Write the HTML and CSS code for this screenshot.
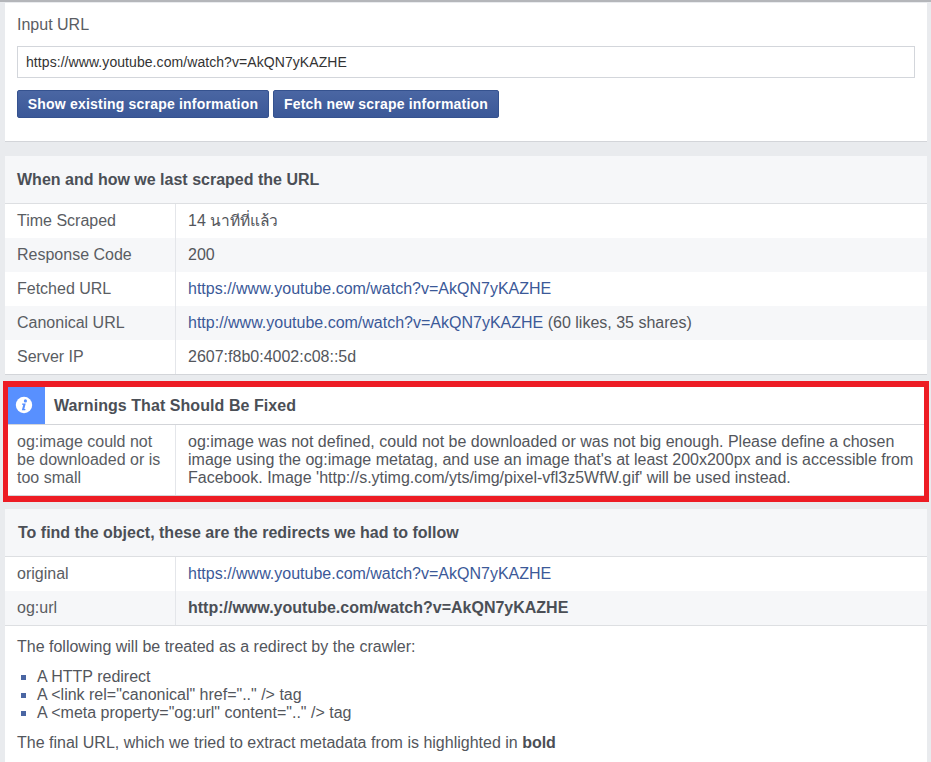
FILE: index.html
```html
<!DOCTYPE html>
<html lang="en">
<head>
<meta charset="utf-8">
<title>Sharing Debugger</title>
<link rel="stylesheet" href="styles.css">
</head>
<body>
<main class="page">
  <section class="card input-card">
    <div class="label">Input URL</div>
    <div class="url-input">https://www.youtube.com/watch?v=AkQN7yKAZHE</div>
    <div class="buttons">
      <button class="btn btn-first">Show existing scrape information</button>
      <button class="btn btn-second">Fetch new scrape information</button>
    </div>
  </section>

  <section class="card scrape-card">
    <h2 class="heading">When and how we last scraped the URL</h2>
    <div class="row"><div class="key">Time Scraped</div><div class="val">14 <span class="thai">นาทีที่แล้ว</span></div></div>
    <div class="row alt"><div class="key">Response Code</div><div class="val">200</div></div>
    <div class="row"><div class="key">Fetched URL</div><div class="val"><a href="#">https://www.youtube.com/watch?v=AkQN7yKAZHE</a></div></div>
    <div class="row alt"><div class="key">Canonical URL</div><div class="val"><a href="#">http://www.youtube.com/watch?v=AkQN7yKAZHE</a> (60 likes, 35 shares)</div></div>
    <div class="row"><div class="key">Server IP</div><div class="val">2607:f8b0:4002:c08::5d</div></div>
  </section>

  <section class="warn-box">
    <div class="warn-head">
      <div class="warn-icon">
        <svg width="18" height="18" viewBox="0 0 18 18"><circle cx="9" cy="9" r="8.2" fill="#fff"/><circle cx="10.4" cy="4.9" r="1.6" fill="#5890ff"/><path d="M7.2 7.6h3.5l-1.4 5.5h1.2l-.3 1.1H6.8l1.5-5.5H7z" fill="#5890ff"/></svg>
      </div>
      <h2 class="warn-title">Warnings That Should Be Fixed</h2>
    </div>
    <div class="row warn-row">
      <div class="key">og:image could not be downloaded or is too small</div>
      <div class="val">og:image was not defined, could not be downloaded or was not big enough. Please define a chosen image using the og:image metatag, and use an image that's at least 200x200px and is accessible from Facebook. Image 'http://s.ytimg.com/yts/img/pixel-vfl3z5WfW.gif' will be used instead.</div>
    </div>
  </section>

  <section class="card redirect-card">
    <h2 class="heading">To find the object, these are the redirects we had to follow</h2>
    <div class="row"><div class="key">original</div><div class="val"><a href="#">https://www.youtube.com/watch?v=AkQN7yKAZHE</a></div></div>
    <div class="row alt ruled"><div class="key">og:url</div><div class="val"><strong>http://www.youtube.com/watch?v=AkQN7yKAZHE</strong></div></div>
    <div class="notes">
      <p>The following will be treated as a redirect by the crawler:</p>
      <ul>
        <li>A HTTP redirect</li>
        <li>A &lt;link rel="canonical" href=".." /&gt; tag</li>
        <li>A &lt;meta property="og:url" content=".." /&gt; tag</li>
      </ul>
      <p>The final URL, which we tried to extract metadata from is highlighted in <strong>bold</strong></p>
    </div>
  </section>
</main>
</body>
</html>
```
FILE: styles.css
```css
* { box-sizing: border-box; }
html, body { margin: 0; padding: 0; height: 100%; overflow: hidden; }
body {
  background: #e9ebee;
  color: #4b4f56;
  font-family: "Liberation Sans", Arial, "Noto Sans", sans-serif;
  font-size: 16px;
  line-height: 18px;
}
.page {
  border-top: 2px solid #b4b6ba;
  padding: 1px 4px 0 5px;
}
.card {
  background: #fff;
  border-bottom: 1px solid #d3d5d9;
}
.input-card {
  height: 139px;
  padding: 12px 12px 0;
}
.label { height: 19px; line-height: 19px; color: #5a5d63; }
.url-input {
  margin-top: 12px;
  height: 32px;
  border: 1px solid #d3d6db;
  padding: 0 8px;
  line-height: 30px;
  font-size: 14px;
  letter-spacing: 0.07px;
  color: #333;
}
.buttons { display: flex; gap: 4px; margin-top: 12px; }
.btn {
  height: 28px;
  padding: 0;
  border: 1px solid #35528f;
  border-radius: 2px;
  background: linear-gradient(#4a66a3, #3b5898);
  color: #fff;
  font: bold 14px/26px "Liberation Sans", Arial, sans-serif;
  letter-spacing: 0.2px;
  text-align: center;
}
.btn-first { width: 252px; }
.btn-second { width: 226px; }
.scrape-card { margin-top: 14px; }
.heading {
  margin: 0;
  height: 48px;
  padding: 0 12px;
  background: #f6f7f9;
  border-bottom: 1px solid #dddfe2;
  font-size: 16px;
  font-weight: bold;
  line-height: 47px;
}
.row { display: flex; min-height: 34px; background: #fff; }
.row.alt { background: #f6f7f9; }
.row.ruled { min-height: 35px; border-bottom: 1px solid #dddfe2; }
.key {
  flex: none;
  width: 171px;
  padding: 8px 12px;
  border-right: 1px solid #e4e6ea;
  color: #5a5d63;
}
.val { flex: 1; padding: 8px 12px; color: #53565c; }
.val strong { color: #4b4f56; }
.thai { font-size: 15.5px; }
a { color: #3b5998; text-decoration: none; }
.warn-box {
  margin: 6px -2px 7px;
  border: 5px solid #ed1c24;
  border-width: 6px 5px;
  background: #fff;
}
.warn-head {
  display: flex;
  align-items: center;
  height: 38px;
  border-bottom: 1px solid #d3d5d9;
}
.warn-icon {
  flex: none;
  width: 37px;
  height: 37px;
  padding: 0 5px 2px 0;
  background: #5890ff;
  display: flex;
  align-items: center;
  justify-content: center;
}
.warn-title {
  margin: 0 0 0 9px;
  font-size: 16px;
  font-weight: bold;
  letter-spacing: 0.06px;
}
.warn-row { border-bottom: 1px solid #d3d5d9; height: 71px; }
.warn-row .key { width: 168px; padding: 8px 9px; }
.warn-row .val { padding: 8px 4px 8px 12px; }
.redirect-card .heading { line-height: 47px; padding-left: 13px; }
.notes { padding: 12px; color: #53565c; }
.notes p { margin: 0; }
.notes strong { color: #4b4f56; }
.notes ul {
  margin: 12px 0;
  padding: 0 0 0 20px;
  list-style: none;
}
.notes li { position: relative; }
.notes li::before {
  content: "";
  position: absolute;
  left: -16px;
  top: 7px;
  width: 5px;
  height: 5px;
  background: #4a66a3;
}
```
